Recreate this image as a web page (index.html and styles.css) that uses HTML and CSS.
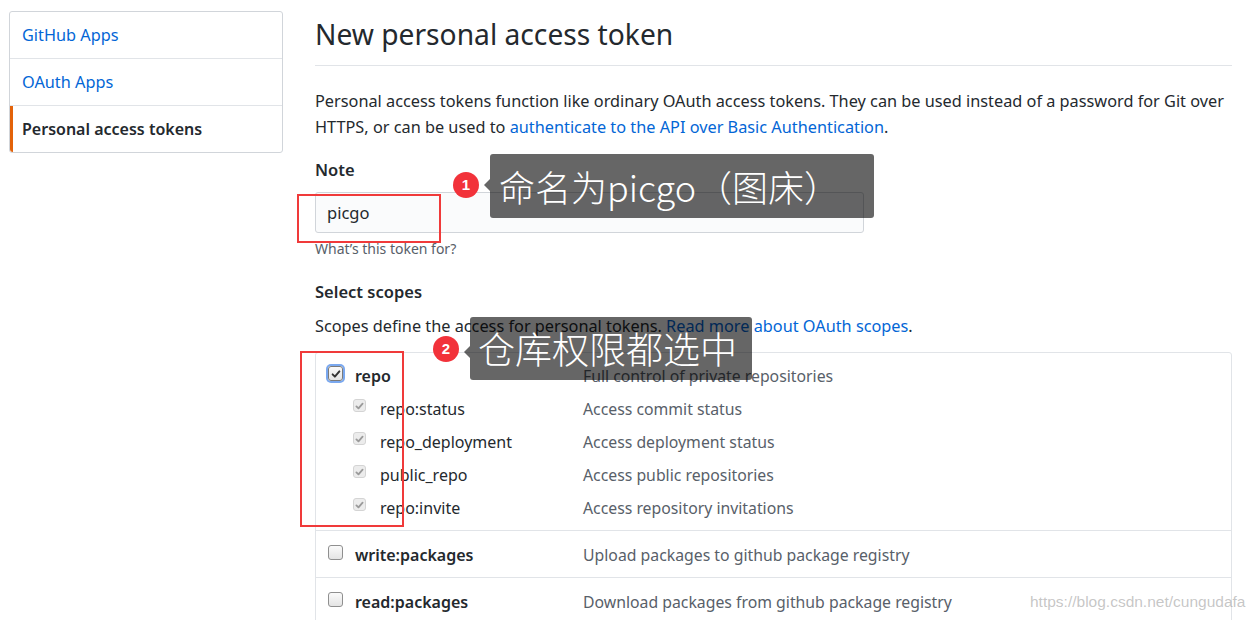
FILE: index.html
```html
<!DOCTYPE html>
<html lang="en">
<head>
<meta charset="utf-8">
<title>New personal access token</title>
<link rel="stylesheet" href="styles.css">
</head>
<body>
<div class="page">
  <nav class="menu">
    <a class="menu-item" href="#">GitHub Apps</a>
    <a class="menu-item" href="#">OAuth Apps</a>
    <a class="menu-item selected" href="#">Personal access tokens</a>
  </nav>
  <main class="main">
    <h1 class="title">New personal access token</h1>
    <p class="intro">Personal access tokens function like ordinary OAuth access tokens. They can be used instead of a password for Git over<br>HTTPS, or can be used to <a href="#">authenticate to the API over Basic Authentication</a>.</p>
    <label class="field-label">Note</label>
    <div class="input">picgo</div>
    <p class="hint">What’s this token for?</p>
    <h3 class="field-label scopes-label">Select scopes</h3>
    <p class="scopes-text">Scopes define the access for personal tokens. <a href="#">Read more about OAuth scopes</a>.</p>
    <div class="scopes">
      <div class="group">
        <div class="row">
          <div class="name main-name"><span class="cb checked focus"><svg viewBox="0 0 16 16"><path d="M3.5 8.5l3 3 6-7" /></svg></span><b>repo</b></div>
          <div class="desc">Full control of private repositories</div>
        </div>
        <div class="row">
          <div class="name sub-name"><span class="cb disabled"><svg viewBox="0 0 16 16"><path d="M3.5 8.5l3 3 6-7" /></svg></span>repo:status</div>
          <div class="desc">Access commit status</div>
        </div>
        <div class="row">
          <div class="name sub-name"><span class="cb disabled"><svg viewBox="0 0 16 16"><path d="M3.5 8.5l3 3 6-7" /></svg></span>repo_deployment</div>
          <div class="desc">Access deployment status</div>
        </div>
        <div class="row">
          <div class="name sub-name"><span class="cb disabled"><svg viewBox="0 0 16 16"><path d="M3.5 8.5l3 3 6-7" /></svg></span>public_repo</div>
          <div class="desc">Access public repositories</div>
        </div>
        <div class="row">
          <div class="name sub-name"><span class="cb disabled"><svg viewBox="0 0 16 16"><path d="M3.5 8.5l3 3 6-7" /></svg></span>repo:invite</div>
          <div class="desc">Access repository invitations</div>
        </div>
      </div>
      <div class="group">
        <div class="row">
          <div class="name main-name"><span class="cb"></span><b>write:packages</b></div>
          <div class="desc">Upload packages to github package registry</div>
        </div>
      </div>
      <div class="group">
        <div class="row">
          <div class="name main-name"><span class="cb"></span><b>read:packages</b></div>
          <div class="desc">Download packages from github package registry</div>
        </div>
      </div>
    </div>
  </main>
</div>

<div class="mark mark-1"></div>
<div class="badge badge-1">1</div>
<div class="tip tip-1">命名为picgo（图床）</div>

<div class="mark mark-2"></div>
<div class="badge badge-2">2</div>
<div class="tip tip-2">仓库权限都选中</div>

<div class="watermark">https://blog.csdn.net/cungudafa</div>
</body>
</html>
```

FILE: styles.css
```css
* { box-sizing: border-box; }
html, body { margin: 0; padding: 0; background: #fff; }
body {
  font-family: "Noto Sans", "Open Sans", sans-serif;
  font-size: 16px;
  color: #24292e;
  width: 1258px;
  height: 620px;
  overflow: hidden;
  position: relative;
}
a { color: #0366d6; text-decoration: none; }

.page {
  display: flex;
  align-items: flex-start;
  gap: 32px;
  padding: 11px 0 0 9px;
}

.menu {
  width: 274px;
  flex: none;
  border: 1px solid #d1d5da;
  border-radius: 3px;
  display: flex;
  flex-direction: column;
}
.menu-item {
  display: block;
  height: 47px;
  line-height: 47px;
  padding: 0 12px;
  font-size: 16.3px;
  border-bottom: 1px solid #e1e4e8;
}
.menu-item:last-child { border-bottom: 0; height: 46px; }
.menu-item.selected {
  color: #24292e;
  font-weight: 600;
  font-size: 16px;
  border-left: 3px solid #e36209;
  padding-left: 9px;
  border-radius: 0 0 0 3px;
}

.main {
  width: 917px;
  flex: none;
  padding-top: 3px;
}
.title {
  margin: 0;
  font-size: 28.2px;
  font-weight: 400;
  line-height: 40px;
  padding-bottom: 11px;
  border-bottom: 1px solid #e1e4e8;
}
.intro {
  margin: 22px 0 0;
  line-height: 26px;
  font-size: 16.3px;
  white-space: nowrap;
}
.field-label {
  display: block;
  margin: 18px 0 0;
  font-weight: 600;
  font-size: 16.5px;
  line-height: 24px;
}
.input {
  margin-top: 10px;
  width: 549px;
  height: 41px;
  border: 1px solid #d1d5da;
  border-radius: 3px;
  background: #fafbfc;
  padding: 0 11px;
  line-height: 40px;
  font-size: 16.5px;
}
.hint {
  margin: 7px 0 0;
  font-size: 14px;
  line-height: 18px;
  color: #586069;
}
.scopes-label { margin-top: 22px; }
.scopes-text {
  margin: 9px 0 0;
  line-height: 26px;
  font-size: 16.3px;
}

.scopes {
  margin-top: 13px;
  border: 1px solid #e1e4e8;
  border-radius: 3px;
}
.group {
  padding: 7px 0 6px 12px;
  border-bottom: 1px solid #e1e4e8;
}
.group:first-child { padding-top: 6px; }
.group:last-child { border-bottom: 0; }
.row {
  display: flex;
  align-items: center;
  height: 33px;
}
.name {
  width: 255px;
  flex: none;
  display: flex;
  align-items: center;
}
.main-name b { font-weight: 600; }
.sub-name { padding-left: 25px; }
.desc { color: #586069; font-size: 15.8px; }

.cb {
  width: 15px;
  height: 15px;
  flex: none;
  margin-right: 12px;
  border: 1px solid #8f8f8f;
  border-radius: 3px;
  background: linear-gradient(#fafafa, #e4e4e4);
  display: flex;
  align-items: center;
  justify-content: center;
  position: relative;
  top: -2px;
}
.cb svg { width: 12px; height: 12px; }
.cb svg path { fill: none; stroke: #333; stroke-width: 2.6; stroke-linecap: round; stroke-linejoin: round; }
.cb.focus { box-shadow: 0 0 0 2px #7aa8ef; border-color: #7a7a7a; }
.cb.disabled {
  border-color: #d4d4d4;
  background: #ececec;
  width: 13px;
  height: 13px;
}
.cb.disabled svg path { stroke: #9a9a9a; }
.sub-name .cb { margin-right: 14px; top: -3px; }

/* annotations */
.mark {
  position: absolute;
  border: 2px solid #f03a3a;
}
.mark-1 { left: 297px; top: 194px; width: 144px; height: 49px; }
.mark-2 { left: 300px; top: 351px; width: 104px; height: 176px; }

.badge {
  position: absolute;
  width: 26px;
  height: 26px;
  border-radius: 50%;
  background: #f2323a;
  color: #fff;
  font-family: "Liberation Sans", Arial, sans-serif;
  font-size: 15px;
  font-weight: 700;
  line-height: 26px;
  text-align: center;
}
.badge-1 { left: 453px; top: 172px; }
.badge-2 { left: 433px; top: 336px; }

.tip {
  position: absolute;
  background: rgba(0, 0, 0, 0.6);
  color: #fff;
  border-radius: 3px;
  white-space: nowrap;
  font-family: "Noto Sans CJK SC", sans-serif;
  font-weight: 300;
}
.tip::before {
  content: "";
  position: absolute;
  left: -6px;
  margin-top: -6px;
  border-style: solid;
  border-width: 6px 6px 6px 0;
  border-color: transparent rgba(0, 0, 0, 0.6) transparent transparent;
}
.tip-1 {
  left: 490px; top: 154px; width: 384px; height: 64px;
  font-size: 36px; line-height: 64px; padding-left: 9px;
}
.tip-1::before { top: 31px; }
.tip-2 {
  left: 470px; top: 317px; width: 282px; height: 63px;
  font-size: 37px; line-height: 63px; padding-left: 8px;
}
.tip-2::before { top: 35px; }

.watermark {
  position: absolute;
  left: 1030px;
  top: 592px;
  font-family: "Liberation Sans", Arial, sans-serif;
  font-size: 15.5px;
  line-height: 20px;
  color: rgba(150, 150, 150, 0.55);
  white-space: nowrap;
}
```
